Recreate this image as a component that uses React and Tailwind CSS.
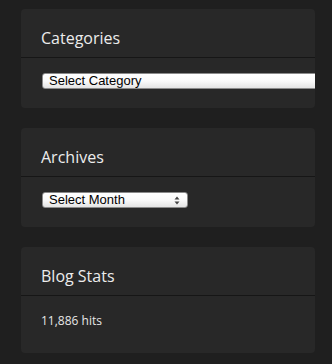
const Widget = ({ title, children, bodyClass }) => {
  return (
    <div className="bg-[#282828] rounded-[4px] overflow-hidden">
      {/* Header */}
      <div className="h-[49px] pt-[17px] pl-[20px] border-b border-[#161616]">
        <h2 className="text-[16px] leading-[24px] text-[#ececec]">{title}</h2>
      </div>

      {/* Body */}
      <div className={bodyClass}>{children}</div>
    </div>
  );
};

const FakeSelect = ({ label, width, arrows }) => {
  return (
    <div
      className={`${width} h-[16px] flex items-center justify-between rounded-[3px] border border-[#8a8a8a] bg-gradient-to-b from-white via-[#fafafa] to-[#e4e4e4] pl-[6px] pr-[6px]`}
      style={{ fontFamily: '"Liberation Sans", Arial, sans-serif' }}
    >
      <span className="text-[13px] leading-[14px] text-black">{label}</span>
      {arrows && (
        <svg width="6" height="9" viewBox="0 0 6 9" className="mr-[1px]">
          <path d="M3 0.5 L5.5 3.5 L0.5 3.5 Z" fill="#444" />
          <path d="M3 8.5 L5.5 5.5 L0.5 5.5 Z" fill="#444" />
        </svg>
      )}
    </div>
  );
};

const App = () => {
  return (
    <div
      className="w-[332px] h-[364px] bg-[#1f1f1f] pt-[9px] pl-[21px] overflow-hidden"
      style={{ fontFamily: '"Open Sans", Lato, sans-serif' }}
    >
      <div className="w-[294px] flex flex-col gap-[20px]">
        <Widget title="Categories" bodyClass="pt-[15px] pb-[19px] pl-[21px]">
          <FakeSelect label="Select Category" width="w-[300px]" />
        </Widget>

        <Widget title="Archives" bodyClass="pt-[15px] pb-[19px] pl-[21px]">
          <FakeSelect label="Select Month" width="w-[146px]" arrows />
        </Widget>

        <Widget title="Blog Stats" bodyClass="pt-[16px] pb-[23px] pl-[20px]">
          <p className="text-[12px] leading-[18px] text-[#e6e6e6]">11,886 hits</p>
        </Widget>
      </div>
    </div>
  );
};

export default App;
